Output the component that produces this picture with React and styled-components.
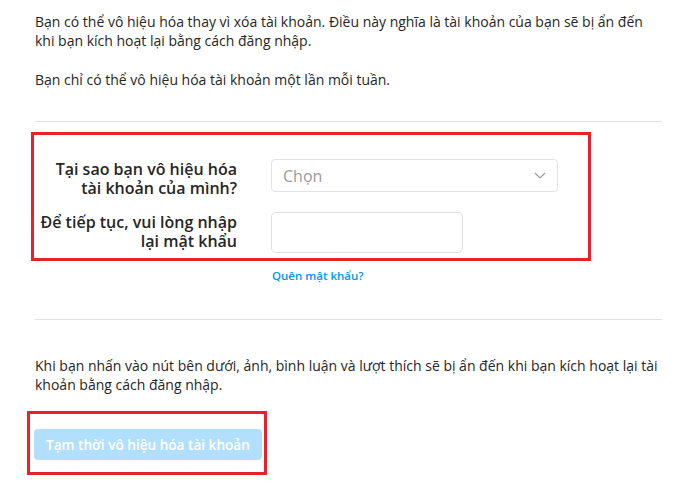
import React from 'react';
import styled, { createGlobalStyle } from 'styled-components';

const GlobalStyle = createGlobalStyle`
    body {
        margin: 0;
        background: #fff;
        font-family: "Open Sans", "Noto Sans", sans-serif;
        color: #262626;
    }
`

const ChevronDown = () => (
    <svg width="12" height="7" viewBox="0 0 12 7">
        <polyline points="1,1 6,6 11,1" fill="none" stroke="#9a9a9a" strokeWidth="1.2"/>
    </svg>
)

const App = () => (
    <StyledPage>
        <GlobalStyle/>
        <StyledText>
            Bạn có thể vô hiệu hóa thay vì xóa tài khoản. Điều này nghĩa là tài khoản của bạn sẽ bị ẩn đến khi bạn kích hoạt lại bằng cách đăng nhập.
        </StyledText>
        <StyledText top={20}>
            Bạn chỉ có thể vô hiệu hóa tài khoản một lần mỗi tuần.
        </StyledText>
        <StyledDivider top={32}/>

        <StyledHighlight form>
            <StyledFormGrid>
                <StyledLabel>Tại sao bạn vô hiệu hóa tài khoản của mình?</StyledLabel>
                <StyledSelect>
                    <span>Chọn</span>
                    <ChevronDown/>
                </StyledSelect>
                <StyledLabel>Để tiếp tục, vui lòng nhập lại mật khẩu</StyledLabel>
                <StyledInput type="password"/>
            </StyledFormGrid>
        </StyledHighlight>

        <StyledForgotLink href="#">Quên mật khẩu?</StyledForgotLink>
        <StyledDivider top={35}/>

        <StyledText top={36} wide>
            Khi bạn nhấn vào nút bên dưới, ảnh, bình luận và lượt thích sẽ bị ẩn đến khi bạn kích hoạt lại tài khoản bằng cách đăng nhập.
        </StyledText>

        <StyledHighlight>
            <StyledDisableButton disabled>Tạm thời vô hiệu hóa tài khoản</StyledDisableButton>
        </StyledHighlight>
    </StyledPage>
)

const StyledPage = styled.div`
    width: 627px;
    padding: 12px 0 0 35px;
    display: flex;
    flex-direction: column;
    align-items: flex-start;
`

const StyledText = styled.p`
    margin: ${p=>p.top||0}px 0 0;
    width: ${p=>(p.wide?'630px':'610px')};
    font-size: 14px;
    line-height: 19px;
    color: #262626;
`

const StyledDivider = styled.div`
    align-self: stretch;
    height: 1px;
    background-color: #e2e2e2;
    margin-top: ${p=>p.top}px;
`

const StyledHighlight = styled.div`
    border: 3px solid #e8212b;
    margin-left: ${p=>(p.form?'-4px':'-8px')};
    margin-top: ${p=>(p.form?'10px':'17px')};
    padding: ${p=>(p.form?'24px 0 5px 0':'15px 2px 12px 4px')};
    width: ${p=>(p.form?'554px':'auto')};
`

const StyledFormGrid = styled.div`
    display: grid;
    grid-template-columns: 203px 287px;
    column-gap: 34px;
    row-gap: 14px;
    align-items: start;
`

const StyledLabel = styled.label`
    font-size: 16px;
    line-height: 19px;
    font-weight: 600;
    text-align: right;
    color: #262626;
    padding-top: 1px;
`

const StyledSelect = styled.div`
    display: flex;
    justify-content: space-between;
    align-items: center;
    height: 31px;
    padding: 0 11px;
    border: 1px solid #e3e3e3;
    border-radius: 4px;
    background: #fff;
    color: #9b9b9b;
    font-size: 16px;
`

const StyledInput = styled.input`
    box-sizing: border-box;
    width: 192px;
    height: 41px;
    border: 1px solid #dedede;
    border-radius: 5px;
    background: #fff;
    outline: none;
`

const StyledForgotLink = styled.a`
    display: block;
    margin: 7px 0 0 237px;
    font-size: 11.5px;
    line-height: 16px;
    font-weight: 600;
    color: #0095f6;
    text-decoration: none;
`

const StyledDisableButton = styled.button`
    display: inline-flex;
    align-items: center;
    height: 31px;
    padding: 0 12px;
    border: none;
    border-radius: 4px;
    background-color: #b2dffc;
    color: #fff;
    font-family: inherit;
    font-size: 13.6px;
    font-weight: 600;
`

export default App;
